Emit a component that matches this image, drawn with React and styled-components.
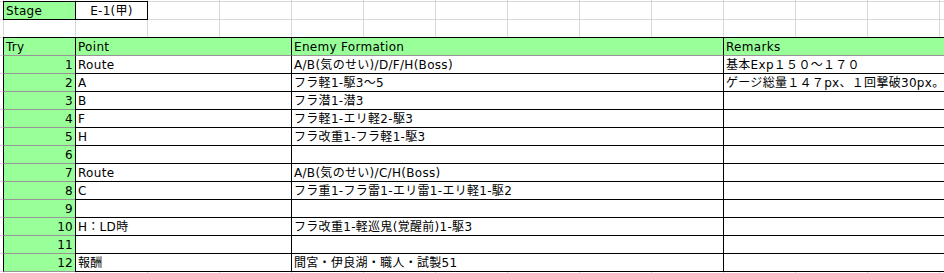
import React from 'react';
import styled, { createGlobalStyle } from 'styled-components';

const GREEN = '#99ff99';
const INK = '#000000';
const SOFT = '#969696';
const GRID = '#d8d8d8';

const GlobalStyle = createGlobalStyle`
  html, body {
    margin: 0;
    padding: 0;
    background: #ffffff;
  }
`;

// the worksheet: 3px sliver of a previous column, then 72px columns / 18px rows
const Sheet = styled.div`
  display: grid;
  grid-template-columns: 3px repeat(14, 72px);
  grid-template-rows: 1px repeat(16, 18px);
  width: 944px;
  height: 273px;
  overflow: hidden;
  background-color: #ffffff;
  background-image:
    linear-gradient(to right, ${GRID} 1px, transparent 1px),
    linear-gradient(to bottom, ${GRID} 1px, transparent 1px);
  background-size: 72px 100%, 100% 18px;
  background-position: 3px 0, 0 1px;
  font-family: "DejaVu Sans", "Noto Sans CJK JP", sans-serif;
  font-size: 12px;
  letter-spacing: 0.3px;
  color: #000;
`;

const justify = { left: 'flex-start', right: 'flex-end', center: 'center' };

// each cell draws all four edges and overlaps its neighbours by 1px
const Cell = styled.div`
  grid-column: ${(p) => p.$col} / span ${(p) => p.$span || 1};
  grid-row: ${(p) => p.$row};
  margin: 0 -1px -1px 0;
  min-width: 0;
  display: flex;
  align-items: flex-end;
  justify-content: ${(p) => justify[p.$align || 'left']};
  padding: 0 2px 1px 2px;
  background: ${(p) => (p.$green ? GREEN : '#ffffff')};
  border: 1px solid ${INK};
  border-top-color: ${(p) => p.$top || INK};
  border-bottom-color: ${(p) => p.$bottom || INK};
  line-height: 14px;
  white-space: nowrap;
  overflow: hidden;
`;

const COLS = {
  try: { col: 2, span: 1 },
  point: { col: 3, span: 3 },
  enemy: { col: 6, span: 6 },
  remarks: { col: 12, span: 4 },
};

const headers = [
  ['try', 'Try'],
  ['point', 'Point'],
  ['enemy', 'Enemy Formation'],
  ['remarks', 'Remarks'],
];

const rows = [
  { point: 'Route', enemy: 'A/B(気のせい)/D/F/H(Boss)', remarks: '基本Exp１５０～１７０' },
  { point: 'A', enemy: 'フラ軽1-駆3～5', remarks: 'ゲージ総量１４７px、１回撃破30px。' },
  { point: 'B', enemy: 'フラ潜1-潜3' },
  { point: 'F', enemy: 'フラ軽1-エリ軽2-駆3' },
  { point: 'H', enemy: 'フラ改重1-フラ軽1-駆3' },
  {},
  { point: 'Route', enemy: 'A/B(気のせい)/C/H(Boss)' },
  { point: 'C', enemy: 'フラ重1-フラ雷1-エリ雷1-エリ軽1-駆2' },
  {},
  { point: 'H：LD時', enemy: 'フラ改重1-軽巡鬼(覚醒前)1-駆3' },
  {},
  { point: '報酬', enemy: '間宮・伊良湖・職人・試製51' },
];

const HEADER_ROW = 4;

const App = () => {
  return (
    <>
      <GlobalStyle />
      <Sheet>
        <Cell $col={2} $row={2} $green>Stage</Cell>
        <Cell $col={3} $row={2} $align="center">E-1(甲)</Cell>

        {headers.map(([key, label]) => (
          <Cell
            key={key}
            $col={COLS[key].col}
            $span={COLS[key].span}
            $row={HEADER_ROW}
            $bottom={SOFT}
            $green
          >
            {label}
          </Cell>
        ))}

        {rows.map((r, i) => {
          const row = HEADER_ROW + 1 + i;
          const top = i === 0 ? SOFT : INK;
          return (
            <React.Fragment key={i}>
              <Cell $col={2} $row={row} $top={SOFT} $bottom={SOFT} $align="right" $green>
                {i + 1}
              </Cell>
              {['point', 'enemy', 'remarks'].map((key) => (
                <Cell key={key} $col={COLS[key].col} $span={COLS[key].span} $row={row} $top={top}>
                  {r[key]}
                </Cell>
              ))}
            </React.Fragment>
          );
        })}
      </Sheet>
    </>
  );
};

export default App;
